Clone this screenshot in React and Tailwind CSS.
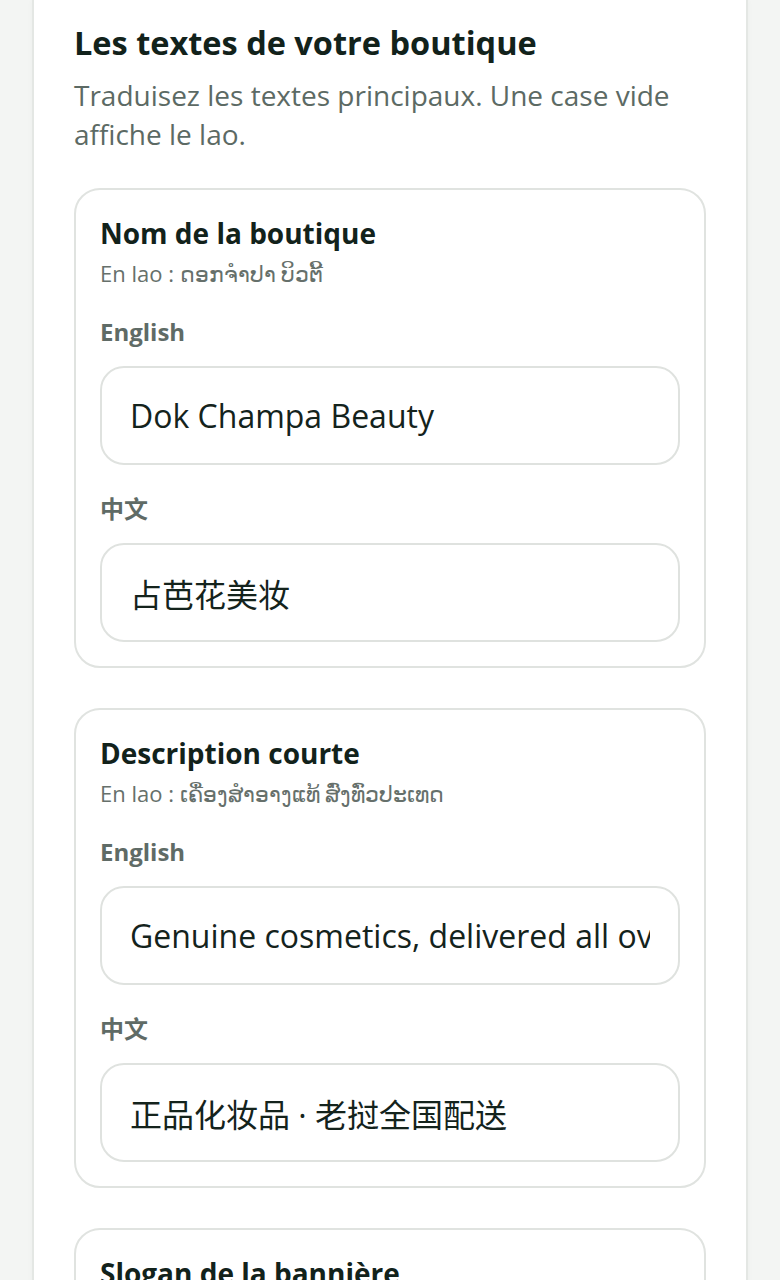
import React from 'react';

const fields = [
  {
    title: 'Nom de la boutique',
    lao: 'ດອກຈຳປາ ບິວຕີ້',
    en: 'Dok Champa Beauty',
    zh: '占芭花美妆',
  },
  {
    title: 'Description courte',
    lao: 'ເຄື່ອງສຳອາງແທ້ ສົ່ງທົ່ວປະເທດ',
    en: 'Genuine cosmetics, delivered all over Laos',
    zh: '正品化妆品 · 老挝全国配送',
  },
  {
    title: 'Slogan de la bannière',
    lao: 'ງາມແບບທຳມະຊາດ',
    en: 'Natural beauty, every day',
    zh: '自然之美，每一天',
  },
];

function LangInput({ label, value }) {
  return (
    <div className="mt-[28px]">
      <label className="block text-[24px] leading-[32px] font-bold text-[#5f6b66] mb-[18px]">{label}</label>
      <input
        readOnly
        value={value}
        className="block w-full h-[99px] rounded-[24px] border-2 border-[#dfe2df] bg-white pl-[28px] pr-[28px] text-[32px] text-[#14231c] outline-none"
      />
    </div>
  );
}

function FieldCard({ field }) {
  return (
    <div className="rounded-[26px] border-2 border-[#e0e3e0] bg-white px-[24px] pt-[26px] pb-[24px]">
      <h3 className="text-[28px] leading-[34px] font-bold text-[#12221b]">{field.title}</h3>
      <p className="mt-[8px] text-[22px] leading-[30px] text-[#66706b]">En lao : {field.lao}</p>
      <LangInput label="English" value={field.en} />
      <LangInput label="中文" value={field.zh} />
    </div>
  );
}

export default function App() {
  return (
    <div
      className="h-[1280px] overflow-hidden bg-[#f3f5f3]"
      style={{ fontFamily: "'Open Sans', 'Noto Sans CJK SC', sans-serif" }}
    >
      <div className="mx-[32px] min-h-[1400px] border-x-2 border-[#e4e7e4] bg-white px-[40px] pt-[23px] shadow-[0_0_6px_rgba(0,0,0,0.03)]">
        <h2 className="text-[32.5px] leading-[40px] font-bold text-[#12221b]">Les textes de votre boutique</h2>
        <p className="mt-[13px] text-[28px] leading-[39px] text-[#5c6a64]">
          Traduisez les textes principaux. Une case vide affiche le lao.
        </p>
        <div className="mt-[34px] flex flex-col gap-[40px]">
          {fields.map((f) => (
            <FieldCard key={f.title} field={f} />
          ))}
        </div>
      </div>
    </div>
  );
}
